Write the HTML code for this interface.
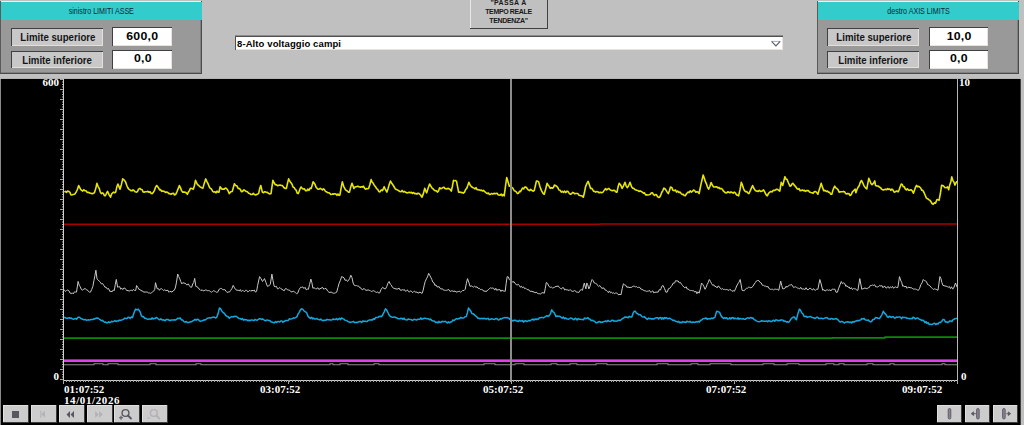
<!DOCTYPE html>
<html><head><meta charset="utf-8"><style>
html,body{margin:0;padding:0;}
body{width:1024px;height:425px;background:#c0c0c0;position:relative;overflow:hidden;font-family:"Liberation Sans", sans-serif;}
.pnl{position:absolute;top:1px;width:201px;height:72px;background:#999999;border-right:1px solid #4a4a4a;border-bottom:1px solid #4a4a4a;box-shadow:inset 1px 0 0 #5a5a5a, inset 0 1px 0 #e4f4f4, inset 0 -1px 0 #808080, inset -1px 0 0 #808080;}
.cy{position:absolute;left:1px;top:1px;width:201px;height:18px;background:#33cccc;border-top:0;text-align:center;line-height:11px;padding-top:1px;box-sizing:border-box;}
.ttl{font-size:9px;color:#0c2438;line-height:11px;display:inline-block;transform:scaleX(0.79);}
.lbl{position:absolute;left:11px;width:91px;height:17px;background:#c8c8c8;border-top:1px solid #404040;border-left:1px solid #404040;box-shadow:inset -1px -1px 0 #e4e0d8;font-weight:bold;font-size:10px;line-height:17px;text-align:center;color:#141414;}
.lbl span{display:inline-block;transform:scaleX(0.965);}
.val{position:absolute;left:112px;width:58px;height:18px;background:#ffffff;border-top:1px solid #404040;border-left:1px solid #404040;box-shadow:inset -1px -1px 0 #e8e4dc;font-weight:bold;font-size:11px;line-height:16px;text-align:center;color:#000;}
.val span{display:inline-block;transform:scaleX(1.12);letter-spacing:0.2px;}
.btn{position:absolute;left:470px;top:-5px;width:77px;height:33px;background:#c0c0c0;border-right:1px solid #404040;border-bottom:1px solid #404040;box-shadow:inset 1px 1px 0 #e8e8e8;font-weight:bold;font-size:7px;line-height:8.8px;text-align:center;color:#181818;letter-spacing:-0.2px;}
.dd{position:absolute;left:235px;top:36px;width:547px;height:13px;background:#fff;border-top:1px solid #505050;border-left:1px solid #505050;box-shadow:inset -1px -1px 0 #e8e4dc, 0 -1px 0 #8c8c8c;}
.ddt{position:absolute;left:1px;top:0;font-weight:bold;font-size:9.5px;line-height:13px;color:#000;letter-spacing:0.1px;}
.chart{position:absolute;left:0;top:78px;width:1024px;height:347px;}
.tb{position:absolute;top:405px;width:24px;height:17px;background:#cccccc;border-right:1px solid #3c3c3c;border-bottom:1px solid #3c3c3c;box-shadow:inset 1px 1px 0 #e0e0e0;}
.tb svg{position:absolute;left:0;top:0;}
</style></head><body>

<div class="pnl" style="left:0px">
  <div class="cy"><span class="ttl">sinistro LIMITI ASSE</span></div>
  <div class="lbl" style="top:27px;left:11px"><span>Limite superiore</span></div>
  <div class="val" style="top:26px;width:59px"><span>600,0</span></div>
  <div class="lbl" style="top:50px;left:11px;height:16px;line-height:17px"><span>Limite inferiore</span></div>
  <div class="val" style="top:49px;height:18px;line-height:15px;width:59px"><span>0,0</span></div>
</div>

<div class="pnl" style="left:817px">
  <div class="cy"><span class="ttl">destro AXIS LIMITS</span></div>
  <div class="lbl" style="top:27px;left:10px"><span>Limite superiore</span></div>
  <div class="val" style="top:26px;width:58px"><span>10,0</span></div>
  <div class="lbl" style="top:50px;left:10px;height:16px;line-height:17px"><span>Limite inferiore</span></div>
  <div class="val" style="top:49px;height:18px;line-height:15px;width:58px"><span>0,0</span></div>
</div>
<div class="btn"><div style="padding-top:4px"><span style="letter-spacing:0.35px">"PASSA A</span><br><span style="letter-spacing:-0.36px">TEMPO REALE</span><br><span style="letter-spacing:-0.32px">TENDENZA"</span></div></div>
<div class="dd"><span class="ddt">8-Alto voltaggio campi</span>
<svg style="position:absolute;left:535px;top:3px" width="11" height="8"><path d="M0.6,1.4H9.2" stroke="#b0b4c0" stroke-width="1.1"/><path d="M0.6,1.4L4.9,5.9L9.2,1.4" fill="none" stroke="#5c5c6a" stroke-width="1.1"/></svg></div>
<svg class="chart" width="1024" height="347" viewBox="0 78 1024 347">
<rect x="0" y="78" width="1024" height="347" fill="#c0c0c0"/>
<rect x="1" y="79" width="1019" height="346" fill="#000"/>
<rect x="0" y="79" width="1" height="346" fill="#8a8a8a"/>
<rect x="1" y="78" width="1019" height="1" fill="#b4b4b4"/>
<rect x="1020" y="79" width="1" height="346" fill="#404040"/>
<g fill="none" stroke-linejoin="round">
<path d="M63,364.8H68 V364.8H72 V364.8H83 V364.8H94 V363.8H103 V364.8H108 V363.8H118 V364.8H127 V364.8H131 V364.8H135 V364.8H145 V364.8H147 V364.8H150 V363.8H156 V364.8H162 V364.8H170 V364.8H178 V364.8H189 V364.8H193 V364.8H196 V363.8H201 V364.8H213 V364.8H225 V364.8H233 V364.8H241 V364.8H251 V364.8H262 V364.8H269 V364.8H271 V364.8H282 V364.8H286 V364.8H293 V364.8H304 V364.8H316 V364.8H327 V364.8H330 V363.8H333 V364.8H336 V364.8H340 V363.8H348 V364.8H350 V364.8H352 V364.8H363 V364.8H369 V364.8H371 V364.8H374 V363.8H379 V364.8H385 V364.8H389 V364.8H396 V364.8H400 V364.8H408 V364.8H418 V364.8H429 V364.8H432 V364.8H442 V364.8H454 V364.8H459 V364.8H467 V364.8H477 V364.8H484 V363.8H495 V364.8H503 V364.8H515 V363.8H524 V364.8H531 V364.8H537 V364.8H539 V364.8H551 V363.8H557 V364.8H563 V364.8H570 V363.8H577 V364.8H588 V364.8H596 V363.8H607 V364.8H611 V364.8H616 V364.8H622 V364.8H626 V364.8H638 V364.8H641 V364.8H648 V364.8H653 V364.8H657 V363.8H668 V364.8H673 V364.8H675 V364.8H680 V364.8H691 V363.8H698 V364.8H710 V363.8H721 V363.8H731 V364.8H737 V364.8H749 V364.8H757 V364.8H759 V364.8H763 V363.8H774 V364.8H782 V364.8H787 V363.8H799 V364.8H805 V364.8H810 V364.8H821 V364.8H824 V364.8H826 V363.8H834 V364.8H836 V364.8H839 V363.8H844 V364.8H854 V364.8H856 V364.8H867 V363.8H873 V364.8H883 V364.8H885 V364.8H890 V363.8H894 V364.8H900 V364.8H904 V364.8H906 V364.8H917 V364.8H919 V364.8H924 V364.8H934 V364.8H936 V364.8H938 V364.8H942 V363.8H945 V364.8H947 V364.8H950 V364.8H957 V364.8" stroke="#8a8a8a" stroke-width="1.1"/>
<path d="M63,359.6H957" stroke="#a8a0a8" stroke-width="0.8" opacity="0.7"/><path d="M63,361H957" stroke="#e040e8" stroke-width="1.8"/>
<path d="M63,338.2H832V337.8H885V337.2H957" stroke="#0a8a0a" stroke-width="1.8"/>
<path d="M63,224.3H600V224H957" stroke="#a80000" stroke-width="1.5"/>
<path d="M63.3,317.6 64.3,317.4 65.3,317.6 66.3,318.3 67.4,318.3 68.4,318.0 69.4,317.8 70.4,318.2 71.4,318.0 72.4,318.9 73.5,319.3 74.5,318.8 75.5,318.4 76.5,319.3 78.1,317.3 79.3,317.2 80.5,318.1 81.8,319.0 83.0,319.3 84.1,319.9 85.2,319.4 86.3,320.2 87.4,320.1 88.5,319.8 89.6,320.1 90.7,319.6 91.7,319.5 92.8,319.6 93.8,318.8 94.9,318.9 95.9,318.2 97.0,318.0 98.2,318.2 99.5,319.3 100.5,319.9 101.5,320.8 102.5,320.3 103.5,321.5 104.5,322.2 105.5,322.0 106.5,322.8 107.6,322.8 108.6,321.7 109.6,322.6 110.7,322.3 111.7,321.3 112.7,321.7 113.8,321.4 114.9,320.5 116.0,321.5 117.1,320.9 118.2,321.1 119.3,320.1 120.4,320.4 121.5,319.9 122.6,319.7 123.7,319.1 124.8,318.1 125.9,318.5 127.0,318.5 128.1,317.3 129.2,317.4 130.3,318.4 131.4,316.9 132.5,317.6 133.6,314.0 134.6,311.2 135.7,309.1 136.9,309.8 138.2,309.1 139.2,310.4 140.2,312.1 141.3,315.5 142.3,316.8 143.4,316.5 144.5,318.2 145.6,318.2 146.7,318.9 147.8,319.4 148.9,319.0 149.9,319.0 151.0,319.3 152.0,317.8 153.1,319.0 154.1,318.4 155.1,318.6 156.2,317.4 157.2,318.0 158.4,319.0 159.6,319.8 160.9,318.8 162.1,320.1 163.1,319.8 164.1,320.2 165.1,320.7 166.2,319.6 167.2,319.5 168.2,319.6 169.2,320.3 170.2,320.6 171.2,319.9 172.3,319.9 173.3,319.9 174.3,319.8 175.3,320.1 176.5,319.4 177.8,318.3 179.0,318.5 180.2,318.0 181.4,319.9 182.6,319.9 183.9,321.6 185.1,322.2 186.2,321.5 187.3,322.4 188.4,322.4 189.5,322.2 190.6,321.8 191.7,321.7 192.8,320.9 193.9,320.4 195.0,319.3 196.1,320.3 197.2,319.2 198.3,319.4 199.4,320.8 200.5,321.4 201.6,320.9 202.8,320.5 204.1,319.8 205.3,319.9 206.5,319.0 207.5,318.2 208.6,318.0 209.6,317.6 210.7,318.0 211.7,317.6 212.9,317.3 214.1,317.1 215.4,317.9 216.6,317.6 218.1,313.6 219.5,307.9 220.8,309.1 222.1,311.5 223.4,312.7 224.6,313.6 225.8,315.5 226.9,316.2 228.1,316.7 229.3,318.2 230.5,317.3 231.7,316.6 232.8,317.0 234.0,316.5 235.2,316.3 236.5,316.5 237.8,317.6 239.1,318.6 240.2,318.5 241.3,319.4 242.3,318.5 243.4,320.2 244.5,319.5 245.6,319.8 246.6,319.8 247.7,320.6 248.8,320.2 249.9,320.7 250.9,320.1 252.0,319.9 253.0,320.2 254.1,320.4 255.1,319.5 256.2,320.0 257.2,320.3 258.3,319.3 259.3,318.8 260.4,318.7 261.4,319.5 262.5,319.0 263.6,319.7 264.7,320.5 265.8,320.7 266.9,319.9 267.9,320.2 269.0,320.6 270.1,320.8 271.2,322.1 272.3,322.1 273.4,322.7 274.4,322.7 275.5,321.5 276.6,322.5 277.6,321.5 278.7,321.6 279.7,322.1 280.8,320.9 281.9,320.9 282.9,322.2 284.0,321.5 285.1,320.8 286.1,320.5 287.2,320.6 288.3,320.4 289.3,318.8 290.4,319.1 291.4,318.9 292.5,318.6 293.6,317.8 294.6,318.1 295.7,317.6 296.9,316.7 298.1,313.9 299.2,312.4 300.4,309.9 301.6,308.8 302.9,309.4 304.2,311.1 305.5,311.8 306.8,313.0 308.1,316.4 309.4,317.6 310.4,318.5 311.5,317.2 312.5,318.9 313.6,318.1 314.6,319.0 315.6,319.1 316.7,318.4 317.7,319.3 318.8,319.4 319.8,319.9 320.8,319.1 321.9,320.1 322.9,320.7 324.0,320.3 325.0,320.2 326.0,320.2 327.1,319.3 328.1,319.9 329.1,319.6 330.2,320.1 331.2,320.0 332.2,319.7 333.3,318.9 334.3,319.6 335.4,319.5 336.4,318.6 337.4,319.8 338.5,319.3 339.5,318.2 340.5,319.6 341.6,318.0 342.6,318.6 343.7,318.9 344.8,320.1 345.9,320.4 347.1,320.9 348.2,321.7 349.3,321.9 350.4,322.5 351.4,322.1 352.5,321.8 353.5,321.5 354.6,322.6 355.6,322.6 356.6,322.2 357.7,322.5 358.7,321.7 359.8,321.5 360.8,321.6 361.8,322.4 362.9,320.9 363.9,321.6 365.0,321.1 366.0,321.5 367.1,321.6 368.1,320.5 369.2,320.1 370.3,319.9 371.3,319.8 372.4,319.9 373.4,318.8 374.5,319.3 375.6,317.6 376.6,317.5 377.7,317.6 379.0,316.5 380.3,316.2 381.6,316.6 382.9,314.5 384.2,311.8 385.5,308.8 386.5,310.0 387.5,311.7 388.5,313.8 389.5,315.7 390.5,316.5 391.6,317.0 392.6,317.2 393.6,317.3 394.7,316.9 395.7,317.7 396.8,317.7 397.8,318.6 398.8,318.7 399.9,318.8 400.9,318.2 401.9,318.4 403.0,319.4 404.0,318.1 405.0,319.6 406.1,319.8 407.1,319.9 408.2,319.0 409.2,319.3 410.2,319.5 411.3,319.6 412.3,320.3 413.3,319.8 414.4,319.2 415.4,319.6 416.5,320.1 417.6,319.3 418.7,319.3 419.8,319.4 420.8,317.9 421.9,319.2 423.0,318.8 424.1,318.3 425.2,318.2 426.3,318.6 427.3,318.8 428.4,318.7 429.5,319.7 430.5,319.1 431.6,320.3 432.6,320.9 433.7,320.9 434.8,321.5 435.8,322.6 436.9,322.1 437.9,322.8 439.0,321.4 440.0,322.6 441.1,322.3 442.1,321.3 443.2,321.8 444.2,321.6 445.3,321.3 446.3,322.2 447.4,322.9 448.4,321.8 449.5,322.8 450.5,322.1 451.7,321.8 452.9,320.0 454.0,320.6 455.2,319.5 456.4,318.6 457.5,319.1 458.6,318.5 459.7,318.4 460.8,317.4 461.8,318.0 462.9,318.0 464.0,317.7 465.1,316.7 466.2,316.6 467.4,312.7 468.5,307.9 469.7,309.8 470.8,311.1 472.0,313.7 473.2,313.8 474.4,314.7 475.5,315.9 476.7,316.7 477.9,318.2 478.9,318.3 479.9,318.7 481.0,318.5 482.0,318.3 483.0,318.8 484.0,318.2 485.1,318.6 486.1,319.2 487.1,318.6 488.1,318.3 489.2,319.7 490.2,319.4 491.2,318.8 492.2,318.9 493.3,319.3 494.3,319.4 495.3,318.8 496.3,318.5 497.4,318.9 498.4,320.0 499.4,319.6 500.5,318.7 501.5,319.0 502.6,318.2 503.6,317.9 504.7,317.6 505.7,317.7 506.8,317.6 507.9,317.8 509.0,318.4 510.0,319.4 511.1,320.9 512.1,320.3 513.2,321.0 514.2,320.2 515.3,320.2 516.3,321.0 517.3,321.0 518.4,321.5 519.4,320.4 520.5,321.1 521.5,321.1 522.5,320.5 523.6,322.2 524.6,320.9 525.7,320.7 526.7,321.5 527.7,321.2 528.8,320.4 529.8,320.9 530.9,320.2 531.9,319.5 532.9,319.1 534.0,320.1 535.0,319.0 536.1,319.7 537.1,318.8 538.1,319.4 539.2,318.0 540.2,317.7 541.3,317.4 542.3,317.6 543.4,317.8 544.6,317.2 545.8,316.4 546.9,315.6 548.1,316.3 549.2,315.7 550.5,313.6 551.7,309.8 552.8,311.7 553.9,312.3 554.9,314.1 556.0,316.6 557.1,316.0 558.1,316.3 559.2,316.2 560.2,316.4 561.3,317.6 562.3,318.2 563.4,317.1 564.4,318.7 565.5,317.9 566.5,318.7 567.6,319.0 568.6,319.2 569.7,318.6 570.8,317.9 571.8,318.4 572.9,319.1 574.0,319.8 575.0,318.3 576.1,318.8 577.1,319.9 578.2,318.6 579.3,319.2 580.3,319.2 581.4,319.6 582.5,319.6 583.5,319.7 584.6,318.0 585.7,318.7 586.7,318.4 587.8,317.6 588.9,318.9 590.0,319.1 591.1,320.5 592.3,320.2 593.4,320.9 594.5,321.3 595.6,322.5 596.6,322.9 597.6,322.3 598.7,321.8 599.7,321.5 600.7,322.4 601.7,322.1 602.8,322.2 603.8,321.5 604.8,321.6 605.8,320.9 606.8,321.8 607.9,320.4 608.9,321.1 609.9,321.6 610.9,321.3 611.9,320.2 613.0,320.3 614.0,321.3 615.0,320.9 616.0,321.2 617.1,321.1 618.1,320.2 619.1,320.2 620.2,320.5 621.3,319.7 622.4,318.5 623.6,318.1 624.7,317.1 625.8,317.3 626.9,317.0 628.1,317.8 629.3,316.3 630.6,317.1 631.8,317.0 633.0,313.4 634.3,311.2 635.4,311.3 636.5,313.2 637.5,313.4 638.6,314.7 639.7,314.4 640.8,315.2 641.9,316.6 643.1,317.1 644.2,316.6 645.3,317.6 646.4,318.6 647.4,319.4 648.4,318.1 649.5,318.7 650.5,318.4 651.5,319.0 652.5,318.7 653.5,319.0 654.5,318.5 655.6,317.9 656.6,317.8 657.6,317.7 658.6,319.0 659.6,317.7 660.6,317.5 661.7,319.2 662.7,317.8 663.7,319.0 664.7,317.5 665.7,318.2 666.7,317.8 667.8,318.8 668.8,318.4 669.8,318.2 670.9,319.0 672.1,319.8 673.2,320.5 674.3,320.2 675.4,321.2 676.6,321.4 677.7,322.1 678.7,321.4 679.8,322.7 680.8,322.3 681.8,322.7 682.8,321.6 683.9,322.2 684.9,322.0 685.9,322.5 686.9,321.3 688.0,321.8 689.0,322.1 690.0,321.3 691.0,322.2 692.1,322.5 693.1,322.0 694.1,322.4 695.1,322.3 696.2,321.6 697.2,322.1 698.3,321.3 699.4,322.0 700.5,320.3 701.7,320.0 702.8,318.9 703.9,318.6 705.0,318.6 706.1,317.9 707.2,319.2 708.3,318.7 709.4,318.8 710.4,318.9 711.5,318.1 712.6,318.6 713.7,317.8 714.8,317.6 716.7,311.2 718.2,311.6 719.6,312.3 720.6,314.9 721.6,316.6 722.6,317.6 723.6,318.5 724.7,317.7 725.7,318.3 726.7,317.7 727.7,318.9 728.8,318.8 729.8,317.7 730.8,319.0 731.8,317.7 732.9,317.6 733.9,318.8 734.9,318.1 735.9,318.6 737.0,318.9 738.0,317.9 739.0,319.2 740.0,318.4 741.1,318.8 742.1,319.0 743.2,318.6 744.3,319.3 745.4,319.2 746.5,318.3 747.5,317.8 748.6,318.1 749.7,318.2 750.8,317.5 751.9,318.2 753.0,318.0 754.1,319.6 755.2,320.0 756.4,320.9 757.5,321.4 758.6,321.7 759.7,321.5 760.7,321.2 761.7,320.8 762.7,321.0 763.7,321.2 764.7,321.3 765.7,321.3 766.7,320.9 767.7,321.7 768.7,320.7 769.8,320.9 770.8,321.6 771.8,321.5 772.8,320.5 773.8,320.3 774.8,321.3 775.8,319.8 776.8,320.0 777.8,320.7 778.8,320.6 779.8,320.5 780.9,320.0 782.0,319.9 783.0,320.3 784.1,321.4 785.2,321.0 786.3,322.0 787.3,321.8 788.4,322.3 789.5,321.5 790.8,319.2 792.1,317.9 793.4,317.0 794.4,317.0 795.4,318.6 796.4,319.6 797.8,314.1 799.3,309.2 800.5,310.2 801.8,313.0 803.0,314.0 804.2,316.6 805.2,316.4 806.3,316.3 807.3,317.4 808.4,316.9 809.4,316.7 810.4,316.4 811.5,317.2 812.5,317.6 813.5,317.8 814.6,318.3 815.6,318.3 816.6,317.3 817.7,317.2 818.7,318.5 819.8,318.6 820.8,318.2 821.8,318.2 822.9,318.8 823.9,318.4 825.0,317.9 826.0,317.7 827.0,317.5 828.1,318.6 829.1,319.1 830.2,319.2 831.2,318.4 832.2,318.8 833.3,319.3 834.3,319.1 835.4,318.8 836.4,318.6 837.7,319.6 839.0,321.0 840.3,322.1 841.4,321.5 842.4,321.5 843.5,322.4 844.5,323.0 845.6,322.2 846.6,321.9 847.7,321.8 848.7,322.0 849.8,322.6 850.8,322.0 851.9,322.9 852.9,321.5 854.0,322.1 855.1,321.3 856.2,321.1 857.3,320.4 858.5,320.7 859.6,320.2 860.7,319.9 861.8,318.6 862.9,319.1 864.0,318.4 865.1,319.7 866.2,320.0 867.2,320.2 868.3,320.1 869.4,321.2 870.5,321.9 871.6,321.5 872.9,319.5 874.2,319.2 875.5,317.6 876.8,317.7 878.1,318.3 879.4,318.6 880.7,316.8 882.0,314.5 883.3,311.2 884.6,313.3 885.9,314.3 887.2,316.6 888.2,317.4 889.3,316.2 890.3,316.6 891.3,317.5 892.3,316.7 893.4,316.7 894.4,318.0 895.4,318.1 896.4,317.0 897.5,317.2 898.5,317.1 899.5,316.9 900.5,317.2 901.6,318.6 902.6,317.1 903.6,317.5 904.6,317.5 905.7,317.4 906.7,318.2 907.8,318.2 908.9,318.6 910.0,318.8 911.1,318.4 912.1,318.8 913.2,317.3 914.3,317.8 915.4,319.0 916.5,318.2 917.6,317.9 918.6,318.7 919.7,319.5 920.7,319.6 921.8,320.6 922.8,320.1 923.9,320.9 924.9,322.7 926.0,321.6 927.0,323.5 928.1,322.6 929.1,324.5 930.2,324.1 931.3,324.4 932.4,324.4 933.5,323.5 934.7,323.3 935.8,324.6 936.9,323.5 938.0,324.1 939.2,322.4 940.5,322.4 941.7,321.4 942.9,319.6 944.1,319.5 945.3,321.9 946.5,321.8 947.7,322.5 948.7,321.9 949.8,320.9 950.8,321.0 951.9,321.6 952.9,319.9 954.0,319.2 955.0,318.8 956.1,318.4 957.1,318.6" stroke="#10a8e0" stroke-width="1.5"/>
<path d="M63.3,290.5 64.4,290.1 65.5,291.5 66.6,290.5 67.7,290.0 68.9,290.7 70.0,293.0 71.2,293.6 72.3,292.9 73.3,293.9 74.4,291.9 75.5,292.0 76.5,292.1 78.1,281.4 79.2,285.2 80.3,286.8 81.4,289.6 82.6,290.1 83.8,289.2 85.1,288.5 86.3,289.6 87.3,289.9 88.4,291.4 89.5,292.2 90.5,292.1 91.7,289.4 92.9,286.3 93.9,280.8 94.9,275.7 95.9,270.2 97.0,278.9 98.1,279.9 99.2,281.2 100.3,282.2 101.5,284.0 102.6,283.5 103.8,285.4 104.9,287.2 106.1,287.2 107.3,289.1 108.5,288.5 109.8,291.4 111.0,291.3 112.1,291.8 113.2,290.0 114.3,290.5 115.3,284.4 116.3,279.4 117.6,287.2 118.6,286.8 119.7,286.7 120.7,289.2 121.8,288.2 122.8,289.6 123.8,288.1 124.9,288.1 125.9,289.6 127.0,290.6 128.1,290.5 129.2,291.1 130.3,290.4 131.3,290.2 132.4,290.8 133.5,289.3 134.6,290.5 135.7,290.5 136.6,285.5 137.8,287.4 139.0,289.6 140.0,289.3 141.0,290.8 142.0,290.7 143.0,291.6 144.0,292.1 145.1,292.0 146.3,292.0 147.4,292.2 148.6,293.0 149.7,292.9 150.7,293.4 151.7,292.6 152.7,291.8 153.7,291.1 154.7,289.6 155.5,282.7 157.2,288.8 158.3,288.5 159.4,290.3 160.5,288.8 161.6,288.7 162.6,289.7 163.7,290.5 164.8,289.7 165.9,290.7 167.0,290.5 168.0,290.3 169.0,292.3 170.0,291.3 171.0,291.7 172.0,292.1 173.1,290.8 174.2,290.3 175.3,288.0 176.5,282.2 177.7,274.0 178.7,276.5 179.8,278.8 180.8,281.7 181.8,283.9 182.9,282.6 184.0,283.2 185.1,283.1 186.2,284.5 187.2,285.0 188.2,283.8 189.3,285.5 190.5,287.2 191.7,287.2 192.7,284.0 193.7,282.5 194.7,278.4 195.8,286.3 196.9,286.8 197.9,287.3 198.9,288.9 200.0,289.6 201.0,290.7 202.1,289.7 203.1,290.9 204.1,290.7 205.2,290.0 206.2,290.0 207.2,290.7 208.3,290.6 209.3,290.7 210.4,291.5 211.4,292.2 212.4,291.6 213.5,290.7 214.5,291.1 215.5,291.6 216.6,292.3 217.6,292.2 219.5,288.9 220.6,288.4 221.7,288.6 222.8,289.6 223.9,289.8 224.9,289.6 226.0,291.2 227.1,292.5 228.2,291.9 229.3,292.2 230.6,290.5 231.9,288.5 233.2,285.4 234.5,287.8 235.8,289.7 237.1,290.3 238.2,290.2 239.2,290.9 240.3,289.6 241.3,291.5 242.4,290.4 243.4,290.7 244.5,291.8 245.5,290.4 246.6,290.2 247.6,291.8 248.7,291.4 249.7,290.2 250.8,291.3 252.0,290.2 253.1,290.9 254.3,290.1 255.4,292.1 256.6,291.3 257.6,285.6 258.6,281.0 259.6,276.6 261.1,278.8 262.5,281.5 263.5,280.1 264.5,278.6 265.9,282.3 267.4,286.4 268.9,285.7 270.3,284.4 271.9,274.1 273.0,280.6 274.2,286.4 275.3,286.7 276.4,286.3 277.5,288.8 278.7,288.5 279.8,287.5 280.9,288.7 282.0,289.3 283.1,290.1 284.2,290.8 285.3,288.7 286.5,288.7 287.6,290.0 288.7,290.0 289.8,290.3 290.9,291.7 292.1,291.9 293.2,291.1 294.3,291.8 295.4,292.6 296.6,293.7 297.7,293.2 299.1,289.5 300.6,287.3 301.7,287.3 302.8,286.9 303.9,288.5 305.1,287.3 306.2,289.8 307.3,289.1 308.4,289.3 309.6,284.4 310.9,279.1 311.9,282.7 312.9,288.3 313.9,287.7 314.9,288.2 315.9,289.2 316.9,288.4 317.9,287.8 318.9,289.5 320.0,288.7 321.0,288.4 322.0,287.6 323.0,287.8 324.0,289.3 325.0,288.3 326.3,288.7 327.6,291.0 328.9,292.2 330.0,292.5 331.1,291.9 332.2,292.8 333.4,293.2 334.5,293.1 335.6,292.8 336.7,292.2 337.9,287.6 339.1,283.3 340.4,280.3 341.6,276.6 342.8,277.1 344.0,277.8 345.1,280.4 346.3,279.8 347.5,281.5 348.6,280.2 349.7,278.4 350.8,275.2 352.0,277.7 353.1,283.0 354.3,285.4 355.4,285.6 356.4,285.6 357.5,286.0 358.6,286.1 359.6,287.6 360.7,287.8 361.7,289.4 362.8,289.8 363.9,288.3 364.9,289.6 366.0,290.3 367.1,290.2 368.1,289.9 369.2,290.3 370.2,290.5 371.3,291.7 372.3,291.1 373.4,290.7 374.4,291.2 375.5,291.9 376.5,292.4 377.6,291.8 378.6,293.1 379.7,292.8 381.1,289.4 382.6,287.3 384.1,288.5 385.5,288.9 386.7,286.7 387.9,283.2 389.1,281.5 390.2,284.0 391.3,285.1 392.4,287.3 393.9,288.3 394.9,288.6 396.0,288.9 397.0,289.1 398.0,288.9 399.1,288.1 400.1,290.0 401.1,290.4 402.2,289.7 403.2,290.1 404.3,289.5 405.3,291.2 406.3,290.9 407.4,289.9 408.4,291.5 409.4,292.1 410.5,290.8 411.5,291.3 412.6,292.7 413.6,291.6 414.7,291.1 415.8,292.6 416.9,291.9 417.9,293.0 419.0,292.8 420.1,291.9 421.1,293.1 422.2,293.2 423.2,290.1 424.2,285.3 425.2,281.5 426.4,278.9 427.5,276.9 428.7,273.3 429.7,275.2 430.8,277.3 431.8,279.5 432.8,282.1 433.9,282.7 434.9,285.4 436.0,284.9 437.0,286.9 438.1,286.9 439.2,286.7 440.2,288.6 441.3,289.0 442.3,288.6 443.4,290.1 444.5,290.2 445.5,290.4 446.6,290.3 447.7,289.9 448.7,289.4 449.8,291.2 450.8,291.4 451.9,290.7 452.9,291.1 454.0,291.5 455.0,290.9 456.1,292.1 457.1,291.9 458.2,291.6 459.2,291.1 460.3,292.2 461.5,291.6 462.8,290.3 464.0,290.6 465.2,289.3 466.4,283.2 467.5,278.6 468.8,282.2 470.1,286.4 471.3,285.9 472.4,286.5 473.6,287.1 474.7,286.2 475.9,287.3 477.0,286.8 478.2,288.4 479.3,288.3 480.4,289.6 481.5,289.4 482.7,289.8 483.8,291.3 484.9,291.0 486.0,291.5 487.1,290.9 488.3,289.6 489.4,288.9 490.5,287.7 491.6,288.3 492.6,288.0 493.7,288.3 494.7,290.1 495.8,288.3 496.8,290.5 497.9,289.6 498.9,289.8 500.0,289.6 501.0,291.5 502.1,289.9 503.1,291.0 504.2,291.1 505.2,291.3 506.2,283.2 507.2,276.6 508.3,276.9 509.4,279.7 510.5,280.2 511.7,281.0 512.8,282.4 513.9,281.5 515.0,283.4 516.1,284.4 517.1,285.1 518.2,284.3 519.3,285.4 520.3,287.2 521.4,286.2 522.4,287.8 523.5,286.9 524.6,288.6 525.6,288.2 526.7,289.3 527.8,289.7 528.8,289.7 529.9,291.3 530.9,291.4 532.0,291.2 533.0,292.0 534.1,291.8 535.1,293.0 536.2,292.1 537.2,293.2 538.3,293.7 539.3,293.6 540.4,294.2 541.7,292.8 543.0,292.7 544.3,293.2 545.3,288.2 546.3,282.5 547.6,283.4 548.9,286.3 550.2,287.3 551.4,287.1 552.5,288.0 553.7,287.6 554.8,287.1 556.0,286.4 557.1,286.4 558.2,285.9 559.3,287.5 560.4,288.3 561.4,289.0 562.5,287.6 563.6,287.8 564.7,290.1 565.8,289.3 566.9,290.1 567.9,289.8 569.0,290.7 570.1,289.5 571.1,290.7 572.2,291.3 573.2,291.4 574.3,290.6 575.4,290.8 576.4,292.2 577.5,292.2 578.7,292.6 580.0,290.4 581.2,289.6 582.4,290.3 584.3,283.0 585.9,288.9 586.8,283.0 587.8,284.9 588.8,288.9 589.9,286.5 591.0,282.4 592.1,279.5 593.2,280.6 594.3,283.0 595.4,283.3 596.5,283.7 597.6,285.4 598.7,286.5 599.8,285.5 600.8,286.8 601.9,288.5 603.0,287.9 604.1,288.2 605.1,290.0 606.2,290.2 607.3,291.3 608.4,292.7 609.4,290.9 610.5,292.8 611.5,292.1 612.6,293.4 613.6,292.8 614.7,293.6 615.7,293.0 616.8,293.1 617.8,293.9 618.9,295.0 619.9,294.2 621.0,294.8 622.2,288.7 623.4,283.8 624.6,284.8 625.7,285.2 626.9,287.3 628.0,286.9 629.0,287.5 630.1,287.4 631.2,287.5 632.2,286.8 633.3,286.2 634.3,286.2 635.4,286.9 636.5,286.6 637.5,287.5 638.6,287.3 639.7,287.3 640.8,289.1 641.9,289.3 643.1,290.0 644.2,290.7 645.3,290.8 646.4,291.3 647.5,291.2 648.5,291.0 649.6,290.5 650.7,292.3 651.7,291.7 652.8,290.8 653.8,292.9 654.9,292.2 656.0,292.3 657.0,292.0 658.1,292.2 659.3,289.6 660.5,290.0 661.8,286.3 663.0,285.4 664.5,288.5 665.9,292.2 667.2,292.1 668.5,288.7 669.8,288.3 671.0,286.7 672.2,285.1 673.3,283.0 674.5,283.1 675.7,280.5 676.9,281.1 678.1,280.9 679.2,282.8 680.4,282.4 681.6,284.4 682.7,285.7 683.8,287.0 684.9,287.9 686.1,286.7 687.2,289.0 688.3,289.0 689.4,290.3 690.5,290.6 691.6,290.5 692.6,290.8 693.7,290.7 694.8,292.2 695.9,291.2 696.9,293.7 698.0,291.8 699.1,293.2 700.3,289.2 701.5,283.0 702.7,284.4 703.8,286.2 705.0,289.3 706.1,287.4 707.1,284.5 708.2,282.6 709.3,279.5 710.5,281.5 711.6,283.7 712.8,285.4 713.9,284.8 714.9,286.5 716.0,286.5 717.1,287.9 718.1,286.0 719.2,286.5 720.2,288.3 721.3,289.3 722.4,288.4 723.4,289.5 724.5,289.3 725.6,289.7 726.7,289.5 727.8,289.9 728.9,290.4 729.9,289.3 731.0,290.2 732.1,291.4 733.2,290.5 734.3,291.3 735.5,288.9 736.7,286.0 737.8,283.9 739.0,282.2 740.2,279.5 742.1,290.3 743.2,290.6 744.3,290.7 745.4,289.2 746.5,288.3 747.5,288.2 748.6,287.2 749.7,287.3 750.8,287.8 751.9,287.3 753.1,286.2 754.2,284.0 755.4,282.5 756.5,280.9 757.7,280.5 758.9,280.7 760.1,282.5 761.2,282.9 762.4,285.3 763.6,285.4 764.7,286.1 765.8,286.1 766.9,286.9 768.1,286.5 769.2,288.7 770.3,289.3 771.4,289.3 772.5,289.1 773.5,290.1 774.6,289.2 775.6,289.2 776.7,289.4 777.7,289.4 778.8,290.3 780.7,281.1 781.7,285.3 782.7,288.9 783.8,288.7 784.9,288.3 786.0,286.3 787.1,287.3 788.2,286.0 789.3,285.2 790.4,285.0 791.5,284.4 793.4,287.3 794.4,287.2 795.5,286.8 796.5,287.4 797.6,288.1 798.6,288.3 799.7,288.9 800.7,287.3 801.8,289.1 802.8,289.0 803.9,288.9 804.9,289.6 806.0,287.7 807.0,289.4 808.1,289.8 809.1,288.9 810.2,288.0 811.3,289.2 812.4,290.1 813.5,288.6 814.6,290.0 815.7,290.2 816.8,289.1 817.9,289.3 819.8,279.5 821.2,284.0 822.7,290.3 823.9,289.6 825.1,291.1 826.2,290.1 827.4,289.9 828.6,290.3 829.8,289.9 831.0,290.8 832.3,289.0 833.5,289.3 834.8,289.1 836.1,292.3 837.4,292.2 838.7,288.2 840.0,284.8 841.3,281.5 842.4,283.6 843.6,282.9 844.7,283.4 845.8,286.3 847.0,285.7 848.1,287.3 849.2,287.0 850.3,289.0 851.4,287.7 852.5,289.6 853.5,288.6 854.6,288.8 855.7,289.0 856.8,290.1 857.9,290.3 859.8,278.6 860.8,284.1 861.8,289.3 862.9,288.7 863.9,288.6 865.0,287.8 866.1,288.7 867.1,288.6 868.2,287.8 869.2,287.6 870.3,285.4 871.4,285.5 872.4,285.0 873.5,285.4 874.6,284.7 875.6,286.8 876.7,286.8 877.7,287.0 878.8,286.3 879.8,285.4 880.9,286.2 881.9,285.5 883.0,287.7 884.0,286.3 885.1,286.5 886.1,288.2 887.2,287.3 888.3,286.6 889.3,288.3 890.4,286.8 891.5,287.7 892.5,286.4 893.6,288.3 894.7,287.1 895.8,286.9 896.8,287.7 897.9,287.3 899.5,276.6 900.6,280.1 901.7,282.5 902.8,286.4 903.8,285.8 904.9,287.1 905.9,286.0 907.0,288.3 908.0,287.3 909.0,287.2 910.1,287.8 911.1,287.6 912.2,288.3 913.2,289.1 914.2,289.0 915.3,289.1 916.3,289.3 917.4,290.0 918.4,290.3 919.6,288.3 920.8,284.8 922.1,282.8 923.3,279.5 924.4,280.6 925.5,280.8 926.6,282.0 927.7,284.7 928.8,285.0 929.9,285.8 931.0,287.2 932.1,288.3 933.3,289.5 934.5,288.8 935.6,289.2 936.8,289.6 938.0,290.3 939.9,276.6 940.9,278.4 941.9,282.6 942.9,285.4 944.0,285.6 945.0,286.0 946.1,286.2 947.2,286.5 948.2,287.4 949.3,286.4 950.4,288.6 951.5,286.8 952.5,288.9 953.6,288.3 955.5,283.0 957.1,287.3" stroke="#c8c8c8" stroke-width="1.0"/>
<path d="M64.4,192.1 65.5,191.3 66.6,192.3 67.7,191.1 68.8,191.4 69.9,192.4 71.0,195.0 72.5,194.7 73.9,194.3 75.0,193.9 76.1,192.1 77.4,189.5 78.7,185.5 80.5,189.2 81.6,190.4 82.7,191.1 83.8,189.7 84.9,190.8 86.0,190.7 87.1,192.4 88.2,192.3 89.3,192.8 90.3,193.3 91.3,193.4 92.4,193.8 93.4,193.2 94.4,192.8 95.7,188.8 96.9,183.3 98.0,186.3 99.2,188.3 100.3,192.1 101.3,193.6 102.3,192.8 103.4,193.5 104.4,195.7 105.4,195.8 106.5,193.2 107.6,191.4 109.0,194.6 110.5,197.2 111.6,194.1 112.7,192.8 113.7,192.0 114.7,192.8 115.7,192.1 116.8,187.1 117.9,184.0 119.0,186.6 120.0,189.2 121.3,184.9 122.7,178.9 124.5,180.4 125.6,182.0 126.7,185.2 127.7,187.5 128.8,189.2 129.9,189.9 130.9,190.6 132.0,190.8 133.0,189.9 134.1,190.7 135.1,191.8 136.2,192.1 137.4,191.8 138.6,189.1 139.8,188.4 140.9,189.5 142.0,189.5 143.1,191.9 144.2,192.1 145.4,191.8 146.7,191.7 147.9,191.4 149.0,192.3 150.1,191.8 151.2,193.5 152.3,193.6 153.4,192.2 154.5,190.3 155.6,187.1 156.7,185.5 158.1,187.2 159.6,189.9 160.6,189.6 161.7,191.4 162.7,190.9 163.7,191.2 164.8,191.8 165.8,192.5 166.8,192.1 167.8,192.5 168.9,193.8 169.9,193.6 171.1,194.3 172.2,193.5 173.4,193.2 174.5,195.0 175.7,194.3 176.9,191.8 178.2,188.6 179.4,185.5 180.5,187.9 181.6,190.6 182.8,192.3 183.9,191.9 185.1,192.3 186.2,192.8 187.4,194.3 188.4,192.0 189.4,190.6 190.4,188.4 191.9,188.5 193.3,189.2 194.4,185.7 195.5,180.4 196.6,182.9 197.7,184.8 198.7,185.4 199.7,186.6 200.8,187.2 201.8,187.9 202.8,188.4 204.2,183.6 205.7,178.9 206.8,181.3 208.0,183.6 209.2,186.7 210.3,188.4 211.5,189.0 212.7,191.4 213.9,192.1 214.9,191.7 215.9,192.8 217.0,191.2 218.0,192.1 219.0,192.1 220.1,186.7 222.0,189.2 223.1,188.9 224.2,189.2 225.3,188.0 226.4,188.4 227.9,190.5 229.3,193.6 230.8,191.8 232.2,191.4 233.3,187.7 234.4,183.7 235.6,185.4 236.9,185.8 238.1,188.4 239.2,188.5 240.3,189.3 241.4,191.6 242.5,191.4 243.9,189.9 245.1,190.6 246.3,191.5 247.4,191.7 248.6,193.2 249.8,193.6 251.0,194.5 252.2,194.5 253.3,193.4 254.5,194.6 255.7,195.0 257.1,194.3 258.6,193.6 259.7,188.6 260.8,185.5 262.3,192.1 263.5,192.7 264.7,191.7 265.9,192.1 267.4,192.4 268.8,193.6 269.9,193.9 271.0,193.6 272.9,180.4 274.1,182.8 275.4,184.8 276.6,184.9 277.8,185.8 278.9,185.3 280.1,185.0 281.3,185.5 282.5,185.6 283.8,187.5 285.0,188.4 286.4,188.4 287.5,183.4 288.6,178.9 289.7,181.0 290.8,182.6 291.9,184.0 293.0,187.0 294.0,187.4 295.0,189.0 296.1,190.1 297.1,193.0 298.1,193.6 299.1,191.6 300.1,188.7 301.1,187.0 302.2,188.3 303.3,189.1 304.4,188.8 305.5,190.6 306.7,190.7 307.8,189.2 309.0,190.3 310.1,188.1 311.3,188.4 313.1,181.8 314.1,183.0 315.1,184.6 316.2,187.5 317.2,188.4 318.2,189.3 319.3,189.0 320.3,188.3 321.4,189.1 322.4,189.9 323.5,188.8 324.5,189.9 325.5,191.4 326.6,191.8 327.6,192.6 328.7,192.8 329.7,193.3 330.8,194.6 331.8,194.3 332.8,193.9 333.8,194.1 334.8,193.8 335.9,194.0 336.9,195.3 337.9,194.0 338.9,195.4 339.9,195.0 341.1,188.2 342.3,181.8 343.7,186.3 345.1,189.2 346.2,190.4 347.3,191.0 348.4,192.1 349.5,192.1 350.8,186.8 352.0,183.3 353.9,188.4 355.0,187.1 356.1,186.7 357.1,186.4 358.2,186.4 359.2,186.8 360.3,187.2 361.3,186.8 362.4,187.1 363.4,186.2 364.5,188.1 365.6,189.2 366.6,188.6 367.6,188.7 368.6,188.4 369.9,184.5 371.1,179.6 372.2,182.2 373.3,183.3 374.4,185.5 375.5,186.7 376.6,188.7 377.7,189.4 378.8,191.4 380.0,191.9 381.3,189.9 382.5,190.6 384.2,186.7 385.5,189.7 386.9,192.1 388.1,188.4 389.3,184.2 390.5,181.1 391.7,183.2 393.0,185.0 394.2,187.0 395.3,188.8 396.4,189.6 397.5,189.9 398.6,190.6 399.8,191.5 401.0,191.7 402.1,190.4 403.3,191.9 404.5,191.4 405.7,192.3 406.8,192.9 408.0,192.8 409.1,192.3 410.3,192.8 411.4,192.3 412.5,193.3 413.6,192.5 414.7,193.7 415.8,193.4 416.9,194.1 418.0,193.2 419.1,193.6 420.6,195.0 422.0,197.2 423.4,193.6 424.7,188.4 425.7,190.9 426.7,192.8 428.1,188.2 429.6,184.0 431.0,186.3 432.3,188.4 433.3,189.0 434.3,190.2 435.4,190.7 436.4,190.9 437.4,192.1 438.5,190.9 439.6,187.7 440.7,188.6 441.8,188.4 442.9,187.5 444.0,187.4 445.1,188.6 446.2,188.9 447.3,188.6 448.4,188.4 449.9,189.2 451.3,191.1 452.4,186.2 453.5,180.4 454.5,180.7 455.5,180.6 456.5,181.1 457.6,186.8 458.6,192.1 459.8,192.0 461.0,192.4 462.1,192.6 463.3,193.1 464.5,192.1 465.6,189.5 466.7,188.4 467.8,185.5 468.9,182.3 470.4,185.5 471.8,187.0 472.9,187.7 473.9,188.0 475.0,188.9 476.0,187.7 477.1,189.7 478.1,189.7 479.2,189.9 480.2,190.4 481.3,190.1 482.3,191.0 483.4,190.4 484.4,191.4 485.9,192.6 487.3,193.6 488.4,193.1 489.5,194.5 490.6,194.2 491.7,193.5 492.8,194.1 493.9,193.4 495.0,193.6 496.1,193.6 497.1,193.2 498.1,194.9 499.1,195.0 500.1,195.2 501.2,194.1 502.2,195.9 503.2,194.5 504.2,195.8 505.4,186.8 506.7,177.5 508.0,181.8 509.3,186.2 510.5,186.1 511.8,187.5 513.0,188.4 514.1,190.5 515.2,191.2 516.3,191.9 517.4,193.6 518.4,193.3 519.5,191.4 520.5,191.6 521.6,189.6 522.6,188.0 523.7,188.9 524.7,187.0 525.9,187.1 527.1,188.4 528.3,189.9 529.5,190.6 530.7,189.4 531.8,190.4 533.0,191.2 534.2,190.6 535.3,186.0 536.4,181.1 537.5,181.1 538.6,181.8 540.0,186.7 541.5,190.6 542.9,193.1 544.2,194.3 545.7,189.0 547.1,183.3 548.2,185.3 549.2,186.3 550.3,188.4 551.3,187.6 552.3,188.2 553.4,187.6 554.4,185.1 555.4,185.5 556.6,186.2 557.8,187.6 558.9,190.0 560.1,190.2 561.3,192.1 562.4,191.3 563.5,192.4 564.6,191.1 565.7,192.6 566.8,191.4 567.9,191.4 569.4,193.6 570.5,194.2 571.5,193.8 572.6,192.4 573.7,192.8 574.8,193.8 575.8,193.5 576.9,193.5 577.9,193.6 579.0,195.3 580.0,195.5 581.1,195.8 582.2,196.1 583.3,197.2 584.4,192.8 585.5,187.0 586.8,183.6 588.1,181.4 589.4,184.8 590.6,188.4 591.6,188.3 592.6,189.6 593.7,191.4 594.7,191.4 595.7,192.1 596.9,191.5 598.1,191.9 599.2,192.8 600.4,192.2 601.6,192.8 603.0,192.1 604.5,189.9 605.6,188.6 606.7,189.9 607.8,189.0 608.9,188.4 610.3,190.1 611.8,190.6 612.8,190.6 613.9,190.3 614.9,190.8 616.0,192.1 617.0,192.1 618.1,186.8 619.2,183.3 620.7,185.1 622.1,188.4 623.5,185.9 625.0,182.3 626.1,185.8 627.2,187.7 628.6,185.7 630.0,182.3 631.7,187.0 632.7,188.3 633.8,188.4 634.8,189.6 635.9,189.9 636.9,190.3 638.0,190.6 639.0,191.4 640.1,190.9 641.2,191.5 642.3,192.2 643.4,193.1 644.5,192.9 645.6,195.0 646.7,194.7 647.8,195.0 649.0,194.7 650.3,194.3 651.5,192.8 652.5,192.8 653.5,194.7 654.5,195.4 655.5,194.5 656.5,194.8 657.5,196.7 658.5,197.4 659.5,197.2 660.6,195.5 661.7,192.5 662.8,190.6 663.9,188.1 665.0,188.7 666.1,190.3 667.2,192.1 668.3,193.6 669.4,190.8 670.5,187.0 671.7,187.4 673.0,190.3 674.2,190.6 675.4,190.0 676.6,192.1 677.7,191.0 678.9,192.4 680.1,192.1 681.1,193.5 682.1,194.5 683.2,194.3 684.2,195.5 685.2,195.8 686.7,193.5 688.1,192.1 689.2,192.5 690.3,190.8 691.4,192.1 692.5,191.3 693.6,190.0 694.7,190.6 695.8,192.2 696.9,191.7 698.0,192.0 699.1,193.6 700.1,188.5 701.2,183.4 702.2,179.2 703.2,175.0 704.3,178.3 705.4,181.7 706.4,183.8 707.5,187.1 708.6,189.2 709.9,186.5 711.1,182.6 712.4,185.2 713.7,187.0 714.8,187.0 715.8,186.9 716.9,186.9 717.9,187.9 719.0,187.4 720.0,188.7 721.1,188.4 722.2,189.1 723.3,190.8 724.4,191.8 725.5,192.8 726.6,193.0 727.7,191.9 728.8,192.1 729.9,192.8 731.0,191.8 732.1,192.6 733.2,193.1 734.3,192.1 735.4,192.8 736.5,194.9 737.5,195.1 738.6,195.8 740.0,189.9 741.3,182.3 742.4,185.1 743.4,188.3 744.5,190.6 745.6,191.7 746.7,191.5 747.8,192.9 748.9,193.6 750.1,191.1 751.4,188.1 752.6,185.5 753.7,188.0 754.8,189.9 756.0,191.0 757.1,191.1 758.3,191.4 759.4,190.4 760.6,191.4 762.0,191.1 763.5,189.9 764.8,192.1 766.0,194.7 767.3,195.8 768.5,193.3 769.8,192.2 771.0,191.4 772.2,191.9 773.3,190.3 774.5,190.5 775.6,189.8 776.8,189.2 777.8,189.6 778.8,190.3 779.8,191.1 781.2,182.3 782.7,185.5 783.8,181.2 784.9,176.7 786.0,179.1 787.1,179.6 788.5,183.0 790.0,186.2 791.0,185.8 792.0,183.9 793.0,183.3 794.0,184.9 795.0,185.9 796.1,187.3 797.1,188.8 798.1,189.2 799.1,188.7 800.2,190.8 801.2,190.4 802.3,190.0 803.3,190.7 804.4,190.3 805.4,191.4 806.8,190.5 808.3,190.6 809.5,192.0 810.8,192.5 812.0,192.8 813.1,193.4 814.2,191.8 815.3,191.5 816.4,192.1 817.9,194.3 819.0,190.4 820.1,187.0 821.2,183.3 822.5,187.4 823.7,190.6 824.9,190.4 826.2,191.4 827.4,191.1 828.5,192.1 829.6,192.3 830.7,194.1 831.8,194.3 833.2,189.4 834.7,186.2 835.8,187.9 836.9,188.5 838.0,189.7 839.1,192.1 840.2,191.9 841.3,191.8 842.4,191.8 843.5,191.4 844.6,191.8 845.7,193.6 846.8,194.0 847.9,193.4 849.0,193.8 850.1,195.5 851.2,194.7 852.3,192.1 853.8,190.5 855.2,189.2 855.9,192.8 857.0,189.5 858.1,187.2 859.2,185.8 860.3,182.3 861.4,180.5 862.8,183.0 864.2,186.1 865.5,187.9 866.8,188.9 867.8,183.4 868.8,178.4 869.9,180.8 870.9,183.5 872.0,184.7 873.4,183.4 874.8,180.9 875.5,185.4 877.0,186.0 878.4,186.1 879.5,187.3 880.5,187.5 881.5,189.1 882.6,189.7 883.6,189.9 884.6,189.6 885.6,189.3 886.7,189.7 887.7,188.5 888.7,189.4 889.7,188.9 890.8,190.4 891.9,189.1 893.1,190.1 894.2,192.2 895.3,191.8 896.7,191.0 898.1,191.8 899.1,189.8 900.2,186.8 901.2,184.0 902.2,184.4 903.2,186.7 904.2,186.7 905.2,188.9 906.3,189.8 907.4,188.8 908.6,190.2 909.7,190.3 910.8,189.7 912.1,190.7 913.4,193.2 914.4,190.4 915.5,187.3 916.5,185.4 917.5,186.7 918.6,186.3 919.6,187.0 920.7,188.0 921.8,190.3 922.8,190.4 924.0,192.5 925.2,195.2 926.4,198.1 927.6,198.7 928.7,199.6 929.9,200.2 931.0,201.7 932.0,203.5 933.2,204.3 934.3,202.9 935.5,203.1 937.0,199.5 938.0,199.8 939.1,200.2 940.4,193.5 941.6,185.4 942.6,185.6 943.7,186.1 944.7,187.5 946.1,187.8 947.5,186.8 948.7,189.7 949.7,185.1 950.8,182.0 951.8,176.9 952.8,180.3 953.9,182.1 954.9,185.1 956.0,182.8 957.1,181.2" stroke="#e6e600" stroke-width="1.6"/>
</g>
<rect x="510" y="79" width="2" height="302" fill="#8c8c8c"/>
<rect x="63" y="79" width="1" height="302" fill="#d0d0d0"/>
<rect x="957" y="79" width="1" height="302" fill="#b8b8b8"/>
<rect x="63" y="380" width="895" height="1" fill="#d0d0d0"/>
<path d="M60,79.5H63 M60,89.5H63 M60,99.5H63 M60,109.5H63 M60,119.5H63 M60,129.5H63 M60,139.5H63 M60,149.5H63 M60,159.5H63 M60,169.5H63 M60,179.5H63 M60,189.5H63 M60,199.5H63 M60,209.5H63 M60,219.5H63 M60,229.5H63 M60,239.5H63 M60,249.5H63 M60,259.5H63 M60,269.5H63 M60,279.5H63 M60,289.5H63 M60,299.5H63 M60,309.5H63 M60,319.5H63 M60,329.5H63 M60,339.5H63 M60,349.5H63 M60,359.5H63 M60,369.5H63 M60,379.5H63 M62,82.0H63 M62,84.5H63 M62,87.0H63 M62,92.0H63 M62,94.5H63 M62,97.0H63 M62,102.0H63 M62,104.5H63 M62,107.0H63 M62,112.0H63 M62,114.5H63 M62,117.0H63 M62,122.0H63 M62,124.5H63 M62,127.0H63 M62,132.0H63 M62,134.5H63 M62,137.0H63 M62,142.0H63 M62,144.5H63 M62,147.0H63 M62,152.0H63 M62,154.5H63 M62,157.0H63 M62,162.0H63 M62,164.5H63 M62,167.0H63 M62,172.0H63 M62,174.5H63 M62,177.0H63 M62,182.0H63 M62,184.5H63 M62,187.0H63 M62,192.0H63 M62,194.5H63 M62,197.0H63 M62,202.0H63 M62,204.5H63 M62,207.0H63 M62,212.0H63 M62,214.5H63 M62,217.0H63 M62,222.0H63 M62,224.5H63 M62,227.0H63 M62,232.0H63 M62,234.5H63 M62,237.0H63 M62,242.0H63 M62,244.5H63 M62,247.0H63 M62,252.0H63 M62,254.5H63 M62,257.0H63 M62,262.0H63 M62,264.5H63 M62,267.0H63 M62,272.0H63 M62,274.5H63 M62,277.0H63 M62,282.0H63 M62,284.5H63 M62,287.0H63 M62,292.0H63 M62,294.5H63 M62,297.0H63 M62,302.0H63 M62,304.5H63 M62,307.0H63 M62,312.0H63 M62,314.5H63 M62,317.0H63 M62,322.0H63 M62,324.5H63 M62,327.0H63 M62,332.0H63 M62,334.5H63 M62,337.0H63 M62,342.0H63 M62,344.5H63 M62,347.0H63 M62,352.0H63 M62,354.5H63 M62,357.0H63 M62,362.0H63 M62,364.5H63 M62,367.0H63 M62,372.0H63 M62,374.5H63 M62,377.0H63 M63.5,380V382 M66.5,380V382 M69.5,380V382 M71.5,380V382 M74.5,380V382 M77.5,380V382 M80.5,380V382 M83.5,380V382 M85.5,380V382 M88.5,380V382 M91.5,380V382 M94.5,380V382 M97.5,380V382 M99.5,380V382 M102.5,380V382 M105.5,380V382 M108.5,380V382 M110.5,380V382 M113.5,380V382 M116.5,380V382 M119.5,380V382 M122.5,380V382 M124.5,380V382 M127.5,380V382 M130.5,380V382 M133.5,380V382 M136.5,380V382 M138.5,380V382 M141.5,380V382 M144.5,380V382 M147.5,380V382 M150.5,380V382 M152.5,380V382 M155.5,380V382 M158.5,380V382 M161.5,380V382 M164.5,380V382 M166.5,380V382 M169.5,380V382 M172.5,380V382 M175.5,380V382 M178.5,380V382 M180.5,380V382 M183.5,380V382 M186.5,380V382 M189.5,380V382 M192.5,380V382 M194.5,380V382 M197.5,380V382 M200.5,380V382 M203.5,380V382 M205.5,380V382 M208.5,380V382 M211.5,380V382 M214.5,380V382 M217.5,380V382 M219.5,380V382 M222.5,380V382 M225.5,380V382 M228.5,380V382 M231.5,380V382 M233.5,380V382 M236.5,380V382 M239.5,380V382 M242.5,380V382 M245.5,380V382 M247.5,380V382 M250.5,380V382 M253.5,380V382 M256.5,380V382 M259.5,380V382 M261.5,380V382 M264.5,380V382 M267.5,380V382 M270.5,380V382 M273.5,380V382 M275.5,380V382 M278.5,380V382 M281.5,380V382 M284.5,380V382 M286.5,380V382 M289.5,380V382 M292.5,380V382 M295.5,380V382 M298.5,380V382 M300.5,380V382 M303.5,380V382 M306.5,380V382 M309.5,380V382 M312.5,380V382 M314.5,380V382 M317.5,380V382 M320.5,380V382 M323.5,380V382 M326.5,380V382 M328.5,380V382 M331.5,380V382 M334.5,380V382 M337.5,380V382 M340.5,380V382 M342.5,380V382 M345.5,380V382 M348.5,380V382 M351.5,380V382 M354.5,380V382 M356.5,380V382 M359.5,380V382 M362.5,380V382 M365.5,380V382 M368.5,380V382 M370.5,380V382 M373.5,380V382 M376.5,380V382 M379.5,380V382 M381.5,380V382 M384.5,380V382 M387.5,380V382 M390.5,380V382 M393.5,380V382 M395.5,380V382 M398.5,380V382 M401.5,380V382 M404.5,380V382 M407.5,380V382 M409.5,380V382 M412.5,380V382 M415.5,380V382 M418.5,380V382 M421.5,380V382 M423.5,380V382 M426.5,380V382 M429.5,380V382 M432.5,380V382 M435.5,380V382 M437.5,380V382 M440.5,380V382 M443.5,380V382 M446.5,380V382 M449.5,380V382 M451.5,380V382 M454.5,380V382 M457.5,380V382 M460.5,380V382 M463.5,380V382 M465.5,380V382 M468.5,380V382 M471.5,380V382 M474.5,380V382 M476.5,380V382 M479.5,380V382 M482.5,380V382 M485.5,380V382 M488.5,380V382 M490.5,380V382 M493.5,380V382 M496.5,380V382 M499.5,380V382 M502.5,380V382 M504.5,380V382 M507.5,380V382 M510.5,380V382 M513.5,380V382 M516.5,380V382 M518.5,380V382 M521.5,380V382 M524.5,380V382 M527.5,380V382 M530.5,380V382 M532.5,380V382 M535.5,380V382 M538.5,380V382 M541.5,380V382 M544.5,380V382 M546.5,380V382 M549.5,380V382 M552.5,380V382 M555.5,380V382 M557.5,380V382 M560.5,380V382 M563.5,380V382 M566.5,380V382 M569.5,380V382 M571.5,380V382 M574.5,380V382 M577.5,380V382 M580.5,380V382 M583.5,380V382 M585.5,380V382 M588.5,380V382 M591.5,380V382 M594.5,380V382 M597.5,380V382 M599.5,380V382 M602.5,380V382 M605.5,380V382 M608.5,380V382 M611.5,380V382 M613.5,380V382 M616.5,380V382 M619.5,380V382 M622.5,380V382 M625.5,380V382 M627.5,380V382 M630.5,380V382 M633.5,380V382 M636.5,380V382 M639.5,380V382 M641.5,380V382 M644.5,380V382 M647.5,380V382 M650.5,380V382 M652.5,380V382 M655.5,380V382 M658.5,380V382 M661.5,380V382 M664.5,380V382 M666.5,380V382 M669.5,380V382 M672.5,380V382 M675.5,380V382 M678.5,380V382 M680.5,380V382 M683.5,380V382 M686.5,380V382 M689.5,380V382 M692.5,380V382 M694.5,380V382 M697.5,380V382 M700.5,380V382 M703.5,380V382 M706.5,380V382 M708.5,380V382 M711.5,380V382 M714.5,380V382 M717.5,380V382 M720.5,380V382 M722.5,380V382 M725.5,380V382 M728.5,380V382 M731.5,380V382 M734.5,380V382 M736.5,380V382 M739.5,380V382 M742.5,380V382 M745.5,380V382 M747.5,380V382 M750.5,380V382 M753.5,380V382 M756.5,380V382 M759.5,380V382 M761.5,380V382 M764.5,380V382 M767.5,380V382 M770.5,380V382 M773.5,380V382 M775.5,380V382 M778.5,380V382 M781.5,380V382 M784.5,380V382 M787.5,380V382 M789.5,380V382 M792.5,380V382 M795.5,380V382 M798.5,380V382 M801.5,380V382 M803.5,380V382 M806.5,380V382 M809.5,380V382 M812.5,380V382 M815.5,380V382 M817.5,380V382 M820.5,380V382 M823.5,380V382 M826.5,380V382 M828.5,380V382 M831.5,380V382 M834.5,380V382 M837.5,380V382 M840.5,380V382 M842.5,380V382 M845.5,380V382 M848.5,380V382 M851.5,380V382 M854.5,380V382 M856.5,380V382 M859.5,380V382 M862.5,380V382 M865.5,380V382 M868.5,380V382 M870.5,380V382 M873.5,380V382 M876.5,380V382 M879.5,380V382 M882.5,380V382 M884.5,380V382 M887.5,380V382 M890.5,380V382 M893.5,380V382 M896.5,380V382 M898.5,380V382 M901.5,380V382 M904.5,380V382 M907.5,380V382 M910.5,380V382 M912.5,380V382 M915.5,380V382 M918.5,380V382 M921.5,380V382 M923.5,380V382 M926.5,380V382 M929.5,380V382 M932.5,380V382 M935.5,380V382 M937.5,380V382 M940.5,380V382 M943.5,380V382 M946.5,380V382 M949.5,380V382 M951.5,380V382 M954.5,380V382 M957.5,380V382 M63.5,380V384 M288.5,380V384 M511.5,380V384 M734.5,380V384 M957.5,380V384" stroke="#a8a8a8" stroke-width="1" fill="none"/>
<g font-family="Liberation Serif" font-weight="bold" font-size="11" fill="#ffffff">
<text x="59" y="86" text-anchor="end">600</text>
<text x="59" y="380" text-anchor="end">0</text>
<text x="959" y="86">10</text>
<text x="961" y="380">0</text>
<text x="64" y="393.2">01:07:52</text>
<text x="64" y="404.2" letter-spacing="0.6">14/01/2026</text>
<text x="260" y="393.2">03:07:52</text>
<text x="483" y="393.2">05:07:52</text>
<text x="706" y="393.2">07:07:52</text>
<text x="902" y="393.2">09:07:52</text>
</g>
</svg>
<div class="tb" style="left:3px;width:25px"><svg width="25" height="18"><rect x="9" y="6" width="7" height="7" fill="#5a5660"/></svg></div>
<div class="tb" style="left:31px;width:25px"><svg width="25" height="18"><rect x="9.3" y="5.8" width="1.1" height="7" fill="#b4b0b8"/><path d="M14,5.8V12.8L10.5,9.3Z" fill="#b4b0b8"/></svg></div>
<div class="tb" style="left:59px;width:25px"><svg width="25" height="18"><path d="M11,6V13L7.5,9.5Z M15,6V13L11.5,9.5Z" fill="#5a5660"/></svg></div>
<div class="tb" style="left:87px;width:25px"><svg width="25" height="18"><path d="M8.2,6V13L11.7,9.5Z M12.2,6V13L15.7,9.5Z" fill="#b4b0b8"/></svg></div>
<div class="tb" style="left:114px;width:25px"><svg width="25" height="18"><circle cx="11.5" cy="8" r="3.4" fill="none" stroke="#5a5660" stroke-width="1.4"/><path d="M14,10.5L17,13.5" stroke="#5a5660" stroke-width="1.8" stroke-linecap="round"/><path d="M5,12.7H9M7,10.7V14.7" stroke="#5a5660" stroke-width="1.1"/></svg></div>
<div class="tb" style="left:142px;width:25px"><svg width="25" height="18"><circle cx="11.8" cy="8" r="3.4" fill="none" stroke="#b4b0b8" stroke-width="1.4"/><path d="M14.3,10.5L17.3,13.5" stroke="#b4b0b8" stroke-width="1.8" stroke-linecap="round"/><path d="M5,13H8.5" stroke="#b4b0b8" stroke-width="1"/></svg></div>
<div class="tb" style="left:937px;width:24px"><svg width="25" height="18"><rect x="11.2" y="3.5" width="2.6" height="10.5" rx="1.3" fill="#8a8290" stroke="#5a5660" stroke-width="0.9"/></svg></div>
<div class="tb" style="left:965px;width:24px"><svg width="25" height="18"><rect x="11.6" y="3.5" width="2.6" height="10.5" rx="1.3" fill="#8a8290" stroke="#5a5660" stroke-width="0.9"/><path d="M8,8.7H11M6.3,8.7L8.6,6.9V10.5Z" stroke="#5a5660" fill="#5a5660" stroke-width="0.9"/></svg></div>
<div class="tb" style="left:993px;width:24px"><svg width="25" height="18"><rect x="9.6" y="3.5" width="2.6" height="10.5" rx="1.3" fill="#8a8290" stroke="#5a5660" stroke-width="0.9"/><path d="M13.3,8.7H16M17.6,8.7L15.3,6.9V10.5Z" stroke="#5a5660" fill="#5a5660" stroke-width="0.9"/></svg></div>
</body></html>
